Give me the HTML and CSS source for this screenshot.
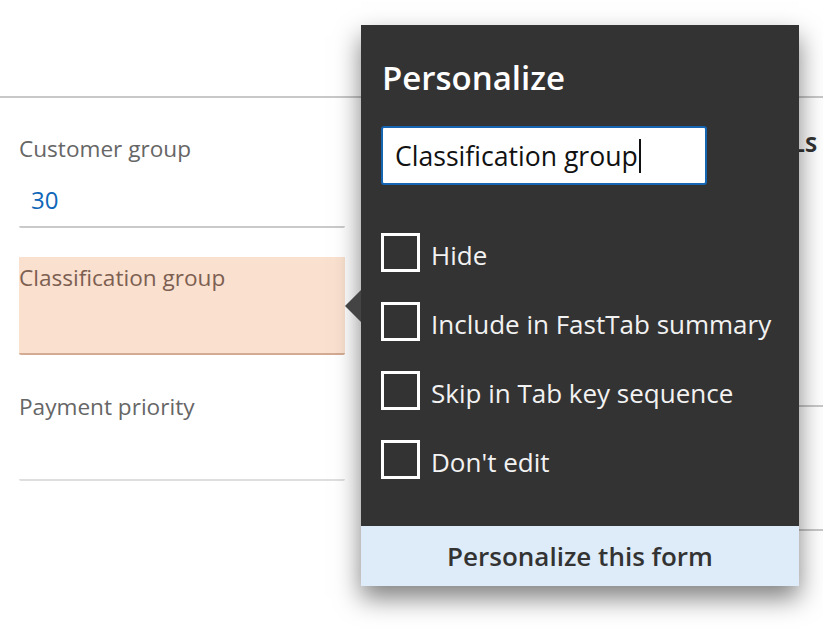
FILE: index.html
```html
<!DOCTYPE html>
<html lang="en">
<head>
<meta charset="utf-8">
<title>Personalize</title>
<link rel="stylesheet" href="styles.css">
</head>
<body>
<div class="page">
  <div class="topbar"></div>
  <div class="content">
    <div class="form">
      <div class="field">
        <div class="label">Customer group</div>
        <div class="value">30</div>
      </div>
      <div class="field field-selected">
        <div class="label">Classification group</div>
      </div>
      <div class="field field-empty">
        <div class="label">Payment priority</div>
      </div>
    </div>
    <div class="side">
      <div class="side-heading">DETAILS</div>
      <div class="side-rule side-rule-1"></div>
      <div class="side-rule side-rule-2"></div>
    </div>
  </div>

  <div class="popup">
    <div class="popup-arrow"></div>
    <div class="popup-body">
      <h1 class="popup-title">Personalize</h1>
      <div class="popup-input"><span>Classification group</span><span class="caret"></span></div>
      <ul class="options">
        <li class="option"><span class="box"></span><span class="option-text">Hide</span></li>
        <li class="option"><span class="box"></span><span class="option-text">Include in FastTab summary</span></li>
        <li class="option"><span class="box"></span><span class="option-text">Skip in Tab key sequence</span></li>
        <li class="option"><span class="box"></span><span class="option-text">Don't edit</span></li>
      </ul>
    </div>
    <div class="popup-footer">Personalize this form</div>
  </div>
</div>
</body>
</html>
```

FILE: styles.css
```css
html, body {
  margin: 0;
  padding: 0;
  background: #ffffff;
}
body {
  font-family: "Open Sans", "Noto Sans", sans-serif;
  overflow: hidden;
}
.page {
  position: relative;
  width: 823px;
  height: 629px;
  overflow: hidden;
}
.topbar {
  height: 96px;
  border-bottom: 2px solid #c8c8c8;
}
.content {
  display: flex;
  justify-content: space-between;
}
.form {
  display: flex;
  flex-direction: column;
  padding-left: 19px;
  width: 326px;
}
.field {
  display: flex;
  flex-direction: column;
  border-bottom: 2px solid #cacaca;
  border-radius: 0 0 2px 2px;
}
.field:first-child {
  margin-top: 37px;
  padding-bottom: 12px;
}
.label {
  font-size: 22.6px;
  line-height: 28px;
  color: #666666;
  white-space: nowrap;
}
.value {
  margin-top: 23px;
  padding-left: 12px;
  font-size: 24px;
  line-height: 28px;
  color: #1066b8;
}
.field-selected {
  margin-top: 29px;
  height: 89px;
  padding-top: 7px;
  background: #f9e0cf;
  border-bottom-color: #d3aa92;
}
.field-selected .label {
  color: #7d5f52;
}
.field-empty {
  margin-top: 38px;
  height: 86px;
  border-bottom-color: #dedede;
}
.side {
  display: flex;
  flex-direction: column;
  width: 200px;
  padding-top: 30px;
}
.side-heading {
  text-align: right;
  padding-right: 6px;
  font-size: 22px;
  font-weight: 700;
  line-height: 30px;
  color: #333333;
}
.side-rule {
  border-top: 2px solid #c8c8c8;
}
.side-rule-1 {
  margin-top: 247px;
}
.side-rule-2 {
  margin-top: 122px;
}

.popup {
  position: absolute;
  left: 361px;
  top: 25px;
  width: 438px;
  height: 561px;
  display: flex;
  flex-direction: column;
  background: #333333;
  box-shadow: 0 12px 24px rgba(0, 0, 0, 0.5);
}
.popup-arrow {
  position: absolute;
  left: -16px;
  top: 265px;
  width: 0;
  height: 0;
  border-top: 16px solid transparent;
  border-bottom: 16px solid transparent;
  border-right: 16px solid #444444;
}
.popup-body {
  flex: 1;
  padding: 0 20px;
}
.popup-title {
  margin: 31px 0 0 1px;
  font-size: 33px;
  font-weight: 600;
  line-height: 44px;
  color: #ffffff;
}
.popup-input {
  margin-top: 26px;
  box-sizing: border-box;
  width: 326px;
  height: 59px;
  display: flex;
  align-items: center;
  padding-left: 12px;
  background: #ffffff;
  border: 2px solid #1565b3;
  border-radius: 3px;
  font-size: 26.6px;
  color: #111111;
}
.caret {
  display: inline-block;
  width: 2px;
  height: 34px;
  background: #111111;
  margin-left: 1px;
}
.options {
  list-style: none;
  margin: 48px 0 0;
  padding: 0;
  display: flex;
  flex-direction: column;
  gap: 30px;
}
.option {
  display: flex;
  align-items: center;
  height: 39px;
}
.box {
  box-sizing: border-box;
  width: 39px;
  height: 39px;
  border: 3.5px solid #ffffff;
  flex: none;
}
.option-text {
  margin-left: 11px;
  padding-top: 4px;
  font-size: 26px;
  line-height: 34px;
  color: #f2f2f2;
}
.popup-footer {
  height: 60px;
  display: flex;
  align-items: center;
  justify-content: center;
  background: #deebf8;
  color: #333333;
  font-size: 26px;
  font-weight: 600;
}
```
